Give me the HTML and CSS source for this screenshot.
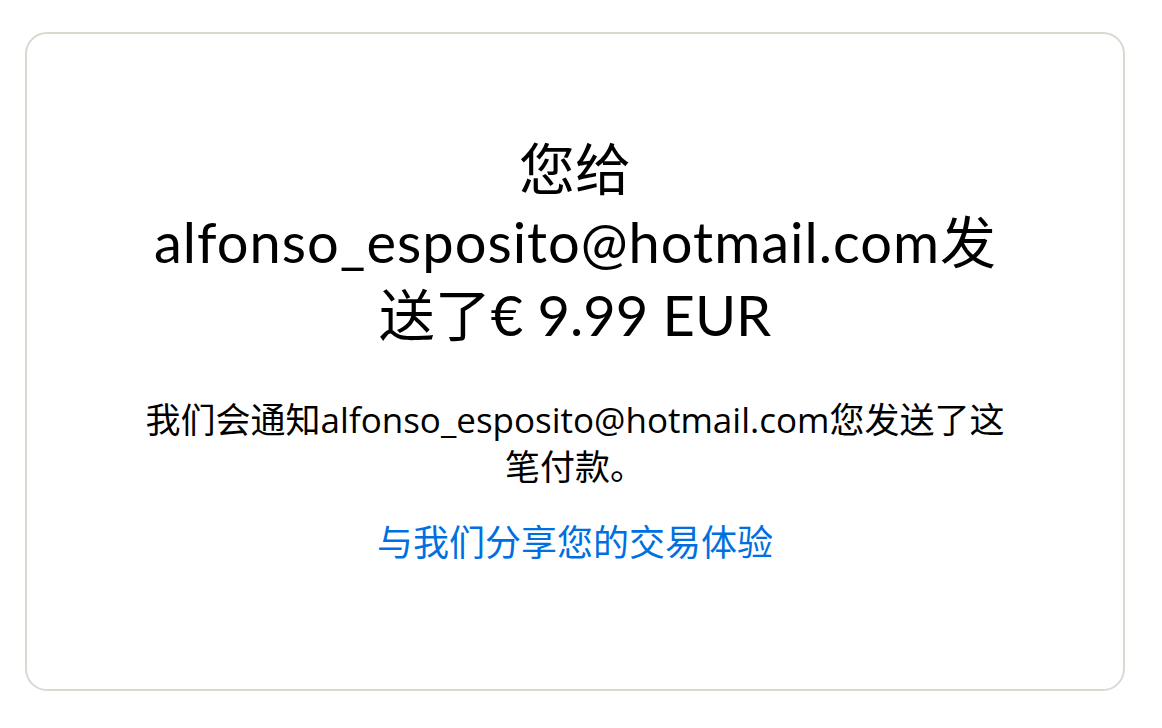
FILE: index.html
```html
<!DOCTYPE html>
<html lang="zh-CN">
<head>
  <meta charset="UTF-8" />
  <meta name="viewport" content="width=device-width, initial-scale=1.0" />
  <title>付款已发送</title>
  <link rel="stylesheet" href="styles.css">
</head>
<body>
  <div class="card">
    <div class="content">
      <h1 class="title">您给 <span class="email">alfonso_esposito@hotmail.com</span>发送了€ 9.99 EUR</h1>
      <p class="note">我们会通知alfonso_esposito@hotmail.com您发送了这笔付款。</p>
      <a class="feedback" href="#">与我们分享您的交易体验</a>
    </div>
  </div>
</body>
</html>
```

FILE: styles.css
```css
body {
  margin: 0;
  padding: 32px 37px 0 25px;
  font-family: 'Lato', 'Noto Sans CJK SC', sans-serif;
  background: #fff;
  color: #000;
}

.card {
  box-sizing: border-box;
  height: 659px;
  border: 2px solid #dbd8d0;
  border-radius: 22px;
  background: #fff;
  padding-top: 98px;
}

.content {
  max-width: 880px;
  margin: 0 auto;
  text-align: center;
  display: flex;
  flex-direction: column;
  align-items: center;
}

.title {
  margin: 0;
  font-size: 56px;
  font-weight: 400;
  line-height: 73px;
}

.title .email {
  letter-spacing: 1px;
}

.note {
  margin: 45px 0 0;
  font-family: 'Open Sans', 'Noto Sans CJK SC', sans-serif;
  font-size: 35px;
  line-height: 47px;
}

.feedback {
  margin-top: 29px;
  font-size: 36px;
  line-height: 47px;
  color: #0070e0;
  text-decoration: none;
}
```
